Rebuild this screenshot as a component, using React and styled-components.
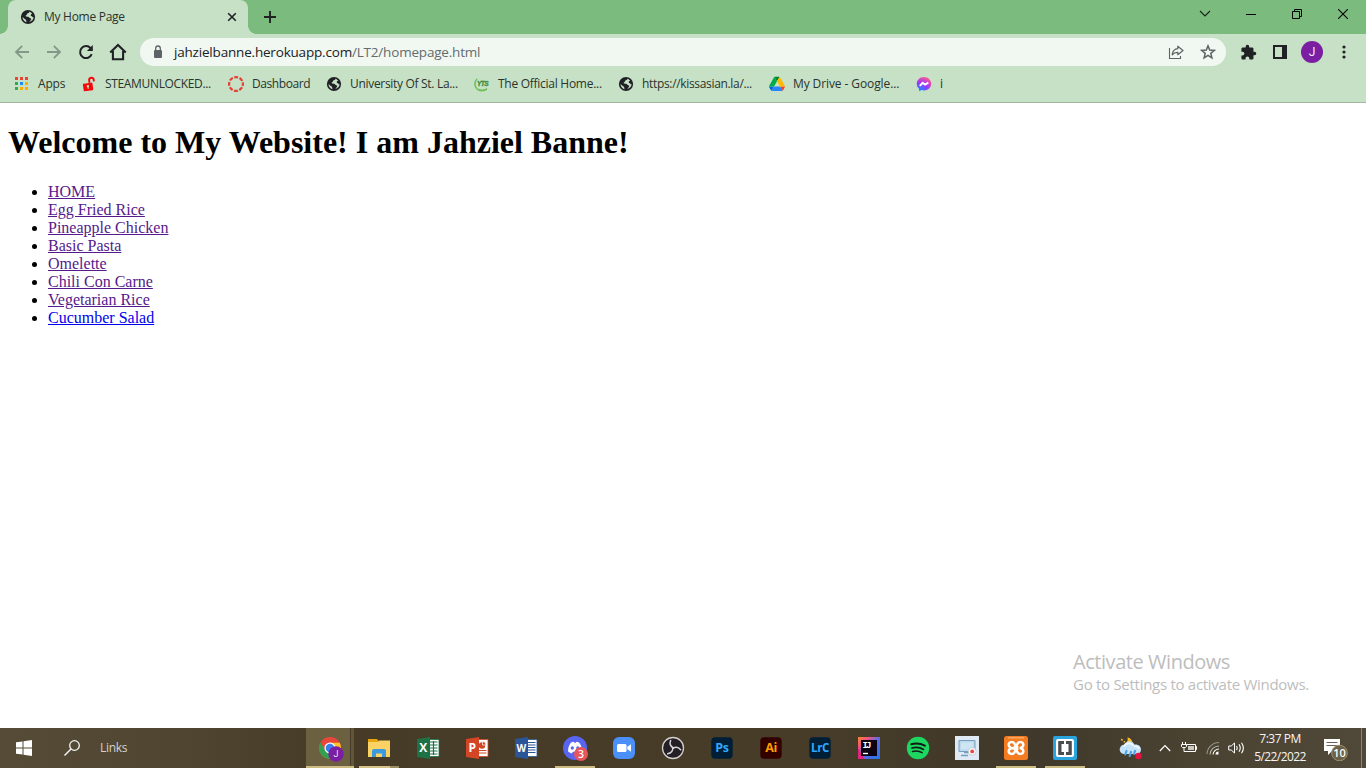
import React from "react";
import styled, { createGlobalStyle } from "styled-components";

const Global = createGlobalStyle`
  html, body { margin: 0; padding: 0; }
  body { width: 1366px; height: 768px; overflow: hidden; background: #fff; }
  svg { display: block; flex: none; }
`;

const UI = `"Open Sans", "Noto Sans", sans-serif`;

const Screen = styled.div`
  width: 1366px; height: 768px; display: flex; flex-direction: column;
  font-family: ${UI}; position: relative; overflow: hidden;
`;
const TabStrip = styled.header`
  height: 34px; background: #7bbb7d; display: flex; align-items: stretch; padding-left: 8px;
`;
const Tab = styled.div`
  position: relative; width: 240px; box-sizing: border-box; background: #c6e1c6;
  border-radius: 8px 8px 0 0; display: flex; align-items: center; padding: 0 10px 0 12px;
  &::before, &::after {
    content: ""; position: absolute; bottom: 0; width: 8px; height: 8px;
  }
  &::before { left: -8px; background: radial-gradient(circle at 0 0, #7bbb7d 7.5px, #c6e1c6 8px); }
  &::after { right: -8px; background: radial-gradient(circle at 100% 0, #7bbb7d 7.5px, #c6e1c6 8px); }
`;
const Text = styled.span`
  font-size: ${(p) => p.$size || 12}px; line-height: 16px; white-space: pre;
  color: ${(p) => p.$color || "#2b332c"}; letter-spacing: ${(p) => p.$track || 0}px;
`;
const TabTitle = styled(Text)`flex: 1; margin-left: 8px;`;
const NewTab = styled.div`width: 44px; display: flex; align-items: center; justify-content: center;`;
const WindowButtons = styled.div`margin-left: auto; display: flex; height: 28px;`;
const WindowButton = styled.div`width: 46px; display: flex; align-items: center; justify-content: center;`;

const Toolbar = styled.nav`
  height: 36px; background: #c6e1c6; display: flex; align-items: center; padding: 0 6px;
`;
const ToolButton = styled.div`width: 32px; display: flex; justify-content: center;`;
const StarButton = styled(ToolButton)`margin-right: -8px;`;
const Omnibox = styled.div`
  width: 1086px; height: 28px; margin: 0 6px; box-sizing: border-box; border-radius: 14px;
  background: #f1f8f1; display: flex; align-items: center; padding: 0 10px;
`;
const Url = styled(Text)`margin-left: 8px; flex: 1; line-height: 20px;`;
const Avatar = styled.div`
  width: 22px; height: 22px; border-radius: 50%; background: #7a1fa2; color: #f3e6f7;
  font: 12px/22px Roboto, sans-serif; text-align: center;
`;

const Bookmarks = styled.div`
  height: 32px; box-sizing: content-box; background: #c6e1c6; border-bottom: 1px solid #9fb8a0;
  display: flex; padding-left: 14px;
`;
const Bookmark = styled.div`
  width: ${(p) => p.$w}px; display: flex; align-items: center; gap: 8px; height: 28px;
`;

const Page = styled.main`
  flex: 1; padding: 0 8px; background: #fff; color: #000;
  font-family: "Liberation Serif", serif; font-size: 16px; overflow: hidden;
`;
const Title = styled.h1`font-size: 32px; line-height: 37px; margin: 21.4px 0; font-weight: bold;`;
const Links = styled.ul`margin: 0; padding-left: 40px; line-height: 18px;`;
const PageLink = styled.a`
  color: ${(p) => (p.$fresh ? "#0000ee" : "#551a8b")}; text-decoration: underline;
`;
const Watermark = styled.aside`
  position: absolute; left: 1073px; top: 649px; display: flex; flex-direction: column; white-space: nowrap;
`;
const WatermarkTitle = styled(Text)`line-height: 26px;`;
const WatermarkText = styled(Text)`line-height: 18px;`;

const Taskbar = styled.footer`
  height: 40px; display: flex; color: #fff;
  background: linear-gradient(90deg, #554b36 0, #4f4530 180px, #453b26 330px, #463c28 800px, #40382a 1040px, #4a4332 1200px, #504838 1366px);
`;
const StartButton = styled.div`width: 48px; display: flex; align-items: center; justify-content: center;`;
const Search = styled.div`width: 242px; display: flex; align-items: center; padding-left: 16px; gap: 20px; box-sizing: border-box; margin-right: 16px;`;
const Apps = styled.div`display: grid; grid-template-columns: repeat(16, 48px); column-gap: 1px;`;
const AppButton = styled.div`
  position: relative; display: flex; align-items: center; justify-content: center;
  background: ${(p) => (p.$active ? "linear-gradient(90deg, #6b6040 44px, #443a27 44px, #443a27 45px, #62573b 45px)" : "none")};
  &::after {
    content: ""; position: absolute; bottom: 0; height: 2px;
    left: ${(p) => (p.$active ? 0 : 4)}px; width: ${(p) => (p.$active ? 48 : 40)}px;
    background: ${(p) =>
      p.$stack ? "linear-gradient(90deg, #d4c286 31px, #9c8f65 31px)" : p.$open ? "#cdbc82" : "transparent"};
  }
`;
const Tray = styled.div`margin-left: auto; display: flex; align-items: center;`;
const TrayItem = styled.div`width: ${(p) => p.$w}px; display: flex; justify-content: center;`;
const Clock = styled.div`
  width: 64px; display: flex; flex-direction: column; align-items: center; gap: 2px; margin-left: 1px;
`;
const Notice = styled.div`width: 50px; display: flex; justify-content: center; margin-left: -1px;`;
const DesktopEdge = styled.div`width: 4px; height: 40px; border-left: 1px solid #8b8576;`;

const Svg = ({ s = 24, w, h, vb, children, ...r }) => (
  <svg width={w || s} height={h || s} viewBox={vb || `0 0 ${w || s} ${h || s}`} fill="none" {...r}>{children}</svg>
);

const Globe = () => (
  <Svg s={16}>
    <circle cx="8" cy="8" r="7.1" fill="#202124" />
    <path d="M9.400 2.800c0 1-.6 1.300-1.600 1.500-.8.200-.6.900-1 1.400-.5.600-1.300.7-1.200 1.400.2.800 1.300.5 2.400.6 1.300.1 1.300 1.300 2.200 1.500 1 .2 1.300.9.8 1.600l-1.700 2.100c2.300-.3 4.200-2.300 4.300-4.600-1 .2-1.500-.4-1.300-1.100-.9.100-1.500-.2-1.600-.9-.1-.8.700-1.100 1.500-1.200-.5-1.100-1.500-1.900-2.800-2.300Z" fill="#c6e1c6" />
    <path d="M2.500 8.100 5 10.200c1 .1 1.300.7 1.200 1.500l.3 1.600C4.200 12.700 2.500 10.700 2.500 8.100Z" fill="#c6e1c6" />
  </Svg>
);

const AppsGrid = () => {
  const c = ["#ea4335", "#ea4335", "#ea4335", "#34a853", "#1a8cff", "#fbad05", "#34a853", "#fbad05", "#fbad05"];
  return (
    <Svg s={16}>
      {c.map((f, i) => <rect key={i} x={1 + (i % 3) * 5} y={1 + Math.floor(i / 3) * 5} width="3" height="3" fill={f} />)}
    </Svg>
  );
};
const Unlocked = () => (
  <Svg s={16}>
    <g transform="rotate(-8 8 9)">
      <rect x="2" y="7" width="9.600" height="7.600" rx=".8" fill="#f50808" />
      <path d="M8.800 7V4.400a2.300 2.300 0 0 1 4.600 0V6" stroke="#f50808" strokeWidth="1.900" />
      <circle cx="6.700" cy="10" r="1.200" fill="#c6e1c6" /><path d="M6.700 10v2.800" stroke="#c6e1c6" />
    </g>
  </Svg>
);
const CanvasLogo = () => (
  <Svg s={16}>
    <circle cx="8" cy="8" r="6.900" stroke="#e63f33" strokeWidth="2.200" strokeDasharray="3.900 1.519" strokeDashoffset="1.950" />
  </Svg>
);
const Yts = () => (
  <Svg s={16}>
    <path d="M3.200 2.800A7 7 0 0 0 3 13c2.500 2.400 7.200 2.500 10 .2" stroke="#6fbd55" strokeWidth="1.200" />
    <path d="M4.500 13c2.800 1.400 6 1 8.500-.5M1.500 5C.6 7.500.9 10 2 12" stroke="#6fbd55" strokeWidth=".9" />
    <text x="3" y="10" fontFamily="Liberation Sans" fontSize="6.500" fontStyle="italic" fontWeight="bold" fill="#388c35" stroke="#388c35" strokeWidth=".3" textLength="11.500">YTS</text>
  </Svg>
);
const Drive = () => (
  <Svg s={16} vb="0 0 87.300 87">
    <g transform="translate(0 4)">
      <path d="M6.600 66.850 10.450 73.500c.8 1.400 1.950 2.500 3.300 3.300L27.500 53H0c0 1.550.4 3.100 1.200 4.500Z" fill="#0066da" />
      <path d="M43.650 25 29.900 1.200c-1.350.8-2.500 1.900-3.300 3.300L1.200 48.500A9 9 0 0 0 0 53h27.500Z" fill="#00ac47" />
      <path d="M73.550 76.800c1.350-.8 2.500-1.900 3.300-3.300l9.250-16c.8-1.400 1.200-2.950 1.200-4.500H59.800l5.850 11.500Z" fill="#ea4335" />
      <path d="M43.650 25 57.400 1.200C56.050.4 54.500 0 52.900 0H34.400c-1.600 0-3.150.45-4.500 1.200Z" fill="#00832d" />
      <path d="M59.800 53H27.500L13.750 76.800c1.350.8 2.900 1.200 4.500 1.200h50.800c1.600 0 3.150-.45 4.500-1.200Z" fill="#2684fc" />
      <path d="m73.400 26.500-12.700-22c-.8-1.400-1.950-2.500-3.300-3.300L43.650 25 59.800 53h27.450c0-1.550-.4-3.100-1.200-4.500Z" fill="#ffba00" />
    </g>
  </Svg>
);
const Messenger = () => (
  <Svg s={16}>
    <defs><radialGradient id="msg" cx=".2" cy="1" r="1.100"><stop stopColor="#0695ff" /><stop offset=".55" stopColor="#a033ff" /><stop offset="1" stopColor="#ff5c87" /></radialGradient></defs>
    <path d="M8 1C3.900 1 .8 3.900.8 7.800c0 2 .8 3.700 2.200 4.900l.2 2.500 2.400-1.100c.8.2 1.600.3 2.400.3 4.100 0 7.200-2.900 7.200-6.700S12.100 1 8 1Z" fill="url(#msg)" />
    <path d="m3.800 9.900 2.800-3.100 2.500 1.700 3.200-1.900" stroke="#fff" strokeWidth="1.900" />
  </Svg>
);

const Back = () => (
  <Svg s={16}><path d="M15 8H2.200M8.200 1.800 2 8l6.200 6.200" stroke="#839886" strokeWidth="1.800" /></Svg>
);
const Forward = () => (
  <Svg s={16}><path d="M1 8h12.800M7.800 1.800 14 8l-6.200 6.200" stroke="#839886" strokeWidth="1.800" /></Svg>
);
const Reload = () => (
  <Svg s={16}>
    <path d="M13.700 10.200A6 6 0 1 1 12.500 4l1 1" stroke="#202124" strokeWidth="2" />
    <path d="M14.800 1v6H8.900Z" fill="#202124" />
  </Svg>
);
const Home = () => (
  <Svg s={18}><path d="M1.200 9.500 9 2l7.800 7.500M3.900 8v8.200h10.200V8" stroke="#202124" strokeWidth="2.100" /></Svg>
);
const Lock = () => (
  <Svg s={16}><rect x="4" y="6" width="8" height="8" rx="1" fill="#5f6368" /><path d="M5.700 7V4.300a2.300 2.300 0 0 1 4.600 0V7" stroke="#5f6368" strokeWidth="1.300" /></Svg>
);
const Share = () => (
  <Svg s={16}><path d="M1.500 4v10.500h11V12" stroke="#5f6368" strokeWidth="1.100" /><path d="M9.800 2.200 15 6.500l-5.200 4.200V8.300C7.200 8.200 5.500 9 4.200 10.800 4.600 7.500 6.500 5 9.800 4.700Z" stroke="#5f6368" strokeWidth="1.200" strokeLinejoin="round" /></Svg>
);
const Star = () => (
  <Svg s={16}><path d="m8 1.900 1.700 4.200 4.600.3-3.500 2.900 1.100 4.500L8 11.400l-3.900 2.400 1.100-4.500-3.500-2.900 4.600-.3Z" stroke="#5f6368" strokeWidth="1.500" /></Svg>
);
const Puzzle = () => (
  <Svg s={17} vb="0 0 24 24"><path fill="#202124" d="M20.500 11H19V7c0-1.100-.9-2-2-2h-4V3.500a2.500 2.500 0 0 0-5 0V5H4c-1.100 0-1.990.9-1.990 2v3.800H3.500c1.490 0 2.700 1.210 2.700 2.700s-1.210 2.700-2.700 2.700H2V20c0 1.100.9 2 2 2h3.800v-1.500c0-1.490 1.210-2.700 2.700-2.700s2.700 1.210 2.700 2.700V22H17c1.100 0 2-.9 2-2v-4h1.500a2.500 2.500 0 0 0 0-5Z" /></Svg>
);
const SidePanel = () => <Svg s={14}><path d="M1 1h12v12H1Z" stroke="#202124" strokeWidth="2" /><path d="M9 0h5v14H9Z" fill="#202124" /></Svg>;
const Dots = () => <Svg w={4} h={16}><circle cx="2" cy="3" r="1.600" fill="#202124" /><circle cx="2" cy="8" r="1.600" fill="#202124" /><circle cx="2" cy="13" r="1.600" fill="#202124" /></Svg>;

const Chrome = () => (
  <Svg s={28}>
    <circle cx="14" cy="14" r="11" fill="#e9473c" />
    <path d="M4.500 8.500A11 11 0 0 0 14 25l5-8.500H9.200Z" fill="#31a350" />
    <path d="M14 8.800h9.700A11 11 0 0 1 14 25l4.700-8.400Z" fill="#fbc622" />
    <circle cx="14" cy="14" r="5.600" fill="#f5f7fb" /><circle cx="14" cy="14" r="4.300" fill="#3b7ded" />
    <circle cx="20" cy="20" r="7.700" fill="#7b1fa2" />
    <text x="20" y="23.300" textAnchor="middle" fontFamily="Roboto" fontSize="9" fill="#eedff3">J</text>
  </Svg>
);
const Explorer = () => (
  <Svg s={24}>
    <path d="M1 3h9l1.500 2H23v4H1Z" fill="#e8a70f" /><path d="M1 6h10l1-1.500h11V21H1Z" fill="#fbd263" />
    <path d="M5 21v-6a2 2 0 0 1 2-2h10a2 2 0 0 1 2 2v6h-4v-3.500H9V21Z" fill="#3b9ade" />
  </Svg>
);
const Office = ({ color, letter }) => (
  <Svg s={24}>
    <path d="M12 3.500h11v17H12Z" fill="#fff" stroke={color} strokeWidth=".8" />
    {letter === "X" && <path d="M14 6h7.500M14 9h7.500M14 12h7.500M14 15h7.500M14 18h7.500M17.500 5v14" stroke={color} strokeWidth="1.200" />}
    {letter === "W" && <path d="M14 6.500h7.500M14 9h7.500M14 11.500h7.500M14 14h7.500M14 16.500h7.500" stroke={color} strokeWidth="1.100" />}
    {letter === "P" && <><circle cx="17" cy="9.500" r="3.200" fill={color} /><path d="M17.500 9V5.500A3.500 3.500 0 0 1 21 9Z" fill={color} stroke="#fff" strokeWidth=".7" /><path d="M14 14.500h7.500M14 17h7.500" stroke={color} strokeWidth="1.200" /></>}
    <path d="M1 3 14 1v22L1 21Z" fill={color} />
    <text x="7.300" y="16.300" textAnchor="middle" fontFamily="Open Sans" fontWeight="bold" fontSize={letter === "W" ? 10 : 12} fill="#fff">{letter}</text>
  </Svg>
);
const Discord = () => (
  <Svg s={28}>
    <circle cx="14" cy="14" r="12" fill="#5865f2" />
    <path d="M9.800 8.700c1-.6 2-.8 3-.9l.5 1h1.500l.5-1c1.100.1 2.100.4 3 .9 2.200 3 2.900 6 2.600 9-1.300 1-2.500 1.500-3.700 1.700l-.9-1.600h-4.500l-.9 1.600c-1.200-.2-2.400-.8-3.700-1.700-.3-3 .4-6 2.600-9Z" fill="#fff" />
    <ellipse cx="11.300" cy="14" rx="1.600" ry="1.800" fill="#5865f2" /><ellipse cx="16.800" cy="14" rx="1.600" ry="1.800" fill="#5865f2" />
    <circle cx="20" cy="20" r="7" fill="#e8555a" />
    <text x="20" y="23.800" textAnchor="middle" fontFamily="Open Sans" fontWeight="600" fontSize="10.500" fill="#fff">3</text>
  </Svg>
);
const Zoom = () => <Svg s={24}><rect x="1" y="1" width="22" height="22" rx="6" fill="#4a90f8" /><rect x="5" y="8" width="9.500" height="8" rx="1.500" fill="#fff" /><path d="m15.300 10.800 3.700-2.600v7.600l-3.700-2.600Z" fill="#fff" /></Svg>;
const Obs = () => (
  <Svg s={24}>
    <circle cx="12" cy="12" r="10.500" fill="#231f25" stroke="#d1d0ce" strokeWidth="1.300" />
    <g fill="none" stroke="#d6d5d5" strokeWidth="1.500" strokeLinecap="round">
      {[0, 120, 240].map((a) => <path key={a} transform={`rotate(${a} 12 12)`} d="M12.500 12C9.500 10.500 8.400 7.700 9.600 4.500" />)}
    </g>
  </Svg>
);
const Adobe = ({ bg, fg, label, size }) => (
  <Svg s={24}>
    <rect x="1.300" y="1.300" width="21.400" height="21.400" rx="4" fill={bg} />
    <text x="12" y="16.300" textAnchor="middle" fontFamily="Open Sans" fontWeight="bold" fontSize={size || 12.5} fill={fg} letterSpacing="-.4">{label}</text>
  </Svg>
);
const IntelliJ = () => (
  <Svg s={24}>
    <defs><linearGradient id="ij" x1="0" y1="0" x2="1" y2="1"><stop stopColor="#f58a2b" /><stop offset=".25" stopColor="#f3527d" /><stop offset=".5" stopColor="#5b6be8" /><stop offset="1" stopColor="#2475e8" /></linearGradient></defs>
    <path d="M1 1h22v22H1Z" fill="url(#ij)" /><path d="M1 12 8 23H1Z" fill="#e32581" /><path d="M4 4h16v16H4Z" fill="#0d0312" />
    <text x="5.500" y="12.300" fontFamily="Liberation Mono" fontWeight="bold" fontSize="9" fill="#fff" textLength="9">IJ</text>
    <path d="M6 17.500h5" stroke="#fff" strokeWidth="1.400" />
  </Svg>
);
const Spotify = () => <Svg s={24}><circle cx="12" cy="12" r="11.200" fill="#1ed760" /><path d="M5.300 8.300c4.500-1.300 9.300-.9 13.500 1.400" stroke="#111c14" strokeWidth="2.100" strokeLinecap="round" /><path d="M6 12c4-1.100 8-.7 11.500 1.400" stroke="#111c14" strokeWidth="1.800" strokeLinecap="round" /><path d="M6.500 15.500c3.500-.9 6.700-.6 9.700 1.200" stroke="#111c14" strokeWidth="1.500" strokeLinecap="round" /></Svg>;
const Recorder = () => (
  <Svg s={24}>
    <path d="M0 0h24v24H0Z" fill="#dfeaf5" /><path d="M4 4.500h16v11H4Z" fill="#bdd9ec" stroke="#779ebd" />
    <path d="M6 6.500h12v7H6Z" fill="#cfe5f3" /><path d="M9 16.500h6M6 19.500h7" stroke="#779ebd" strokeWidth="1.300" />
    <circle cx="17.200" cy="15.400" r="4" fill="#f5f6f8" stroke="#b6c4d1" strokeWidth=".7" /><circle cx="17.200" cy="15.400" r="1.900" fill="#ef4544" />
  </Svg>
);
const Xampp = () => (
  <Svg s={24}>
    <rect width="24" height="24" rx="2.500" fill="#f47b20" /><path d="M4 1.800h16" stroke="#faae72" strokeWidth="1.300" />
    <path d="M10.300 12.400C7.600 12.600 4.400 11 4.700 8.300c.3-2.600 4.400-3 5.800-.6L12 10l1.500-2.300c1.400-2.400 5.500-2 5.800.6.200 1.700-1 2.900-2.700 3.700 1.700.7 2.900 2 2.700 3.700-.3 2.600-4.400 3-5.800.6L12 14l-1.500 2.300c-1.400 2.400-5.500 2-5.800-.6-.2-1.700 1-2.900 2.700-3.700" stroke="#fff" strokeWidth="2.500" strokeLinecap="round" strokeLinejoin="round" />
    <path d="m10 10 4 4m0-4-4 4" stroke="#fff" strokeWidth="2.500" />
  </Svg>
);
const Brackets = () => (
  <Svg s={24}><rect width="24" height="24" rx="2" fill="#2ba3dc" /><rect x="3" y="3" width="18" height="18" rx="2" fill="#fff" /><path d="M11 5H5.200v14H11v-3H8.500V8H11ZM13 5h5.800v14H13v-3h2.500V8H13Z" fill="#4a4d50" /></Svg>
);
const Weather = () => (
  <Svg s={26}>
    <path d="M10.500 2.200c1 4-1.300 7.500-6.800 8.800 1.600 2.600 4 3.700 7 3.200l5-4.500c.2-3.700-1.800-6.500-5.200-7.500Z" fill="#f7bb2c" />
    <path d="m4.300 4 1.200 1.500M6.700 6.300l1.200.8" stroke="#f7bb2c" strokeWidth="1.500" />
    <path d="M7.300 19a4.600 4.600 0 0 1-.1-9.200c1.300-4.200 8-4.900 10.200-.2 4-.5 6.600 1.800 6.600 4.800 0 2.800-2 4.600-4.600 4.600Z" fill="#c5e3f8" />
    <path d="M7 11.700c1.500-4 7.200-4.700 9.300-.8M17 11.500c2.500-.5 4.500.6 5 2.400" stroke="#edf8ff" strokeWidth="1.800" />
    <path d="m9.500 16-1.200 3.500M14 17l-1.300 4M18 16l-1 3" stroke="#4ba0e6" strokeWidth="2.200" strokeLinecap="round" /><circle cx="21.500" cy="21" r="3.200" fill="#e3123e" />
  </Svg>
);

const bookmarks = [
  { w: 67, icon: <AppsGrid />, label: "Apps" },
  { w: 147, icon: <Unlocked />, label: "STEAMUNLOCKED...", track: -0.34 },
  { w: 98, icon: <CanvasLogo />, label: "Dashboard", track: -0.42 },
  { w: 148, icon: <Globe />, label: "University Of St. La...", track: -0.31 },
  { w: 144, icon: <Yts />, label: "The Official Home...", track: -0.27 },
  { w: 151, icon: <Globe />, label: "https://kissasian.la/...", track: -0.33 },
  { w: 147, icon: <Drive />, label: "My Drive - Google...", track: -0.1 },
  { w: 50, icon: <Messenger />, label: "i" },
];
const apps = [
  { icon: <Chrome />, active: true, open: true },
  { icon: <Explorer />, open: true, stack: true },
  { icon: <Office color="#1d7145" letter="X" /> },
  { icon: <Office color="#d24625" letter="P" /> },
  { icon: <Office color="#2a5699" letter="W" /> },
  { icon: <Discord />, open: true },
  { icon: <Zoom /> },
  { icon: <Obs /> },
  { icon: <Adobe bg="#001e36" fg="#31a8ff" label="Ps" /> },
  { icon: <Adobe bg="#330000" fg="#ff9a00" label="Ai" /> },
  { icon: <Adobe bg="#001e36" fg="#31a8ff" label="LrC" size={11.5} /> },
  { icon: <IntelliJ /> },
  { icon: <Spotify /> },
  { icon: <Recorder /> },
  { icon: <Xampp />, open: true },
  { icon: <Brackets />, open: true },
];
const links = ["HOME", "Egg Fried Rice", "Pineapple Chicken", "Basic Pasta", "Omelette", "Chili Con Carne", "Vegetarian Rice", "Cucumber Salad"];

export default function App() {
  return (
    <Screen>
      <Global />
      <TabStrip>
        <Tab>
          <Globe />
          <TabTitle $track={-0.28}>My Home Page</TabTitle>
          <Svg s={12}><path d="m2.200 2.200 7.600 7.600m0-7.600L2.200 9.800" stroke="#202124" strokeWidth="1.600" /></Svg>
        </Tab>
        <NewTab><Svg s={12}><path d="M6 0v12M0 6h12" stroke="#202124" strokeWidth="1.900" /></Svg></NewTab>
        <WindowButtons>
          <WindowButton><Svg w={12} h={8}><path d="m1 1 5 5 5-5" stroke="#172318" strokeWidth="1.100" /></Svg></WindowButton>
          <WindowButton><Svg s={10}><path d="M0 5.500h10" stroke="#000" /></Svg></WindowButton>
          <WindowButton><Svg s={10}><path d="M.5 2.500h7v7h-7ZM2.500 2.500v-2h7v7h-2" stroke="#000" /></Svg></WindowButton>
          <WindowButton><Svg s={10}><path d="m0 0 10 10M10 0 0 10" stroke="#000" strokeWidth="1.100" /></Svg></WindowButton>
        </WindowButtons>
      </TabStrip>
      <Toolbar>
        <ToolButton><Back /></ToolButton>
        <ToolButton><Forward /></ToolButton>
        <ToolButton><Reload /></ToolButton>
        <ToolButton><Home /></ToolButton>
        <Omnibox>
          <Lock />
          <Url $size={13.5} $color="#202124" $track={-0.19}>jahzielbanne.herokuapp.com<Text $size={13.5} $color="#646b6d" $track={-0.19}>/LT2/homepage.html</Text></Url>
          <ToolButton><Share /></ToolButton>
          <StarButton><Star /></StarButton>
        </Omnibox>
        <ToolButton><Puzzle /></ToolButton>
        <ToolButton><SidePanel /></ToolButton>
        <ToolButton><Avatar>J</Avatar></ToolButton>
        <ToolButton><Dots /></ToolButton>
      </Toolbar>
      <Bookmarks>
        {bookmarks.map((b) => (
          <Bookmark key={b.label} $w={b.w}>{b.icon}<Text $track={b.track ?? -0.2}>{b.label}</Text></Bookmark>
        ))}
      </Bookmarks>
      <Page>
        <Title>Welcome to My Website! I am Jahziel Banne!</Title>
        <Links>
          {links.map((l, i) => <li key={l}><PageLink $fresh={i === 7}>{l}</PageLink></li>)}
        </Links>
      </Page>
      <Watermark>
        <WatermarkTitle $size={20} $color="#bdbdbd" $track={-0.45}>Activate Windows</WatermarkTitle>
        <WatermarkText $size={15} $color="#bdbdbd" $track={-0.28}>Go to Settings to activate Windows.</WatermarkText>
      </Watermark>
      <Taskbar>
        <StartButton><Svg s={16}><path d="M0 2.300 6.500 1.400v6.100H0ZM7.500 1.200 16 0v7.500H7.500ZM0 8.500h6.500v6.100L0 13.700ZM7.500 8.500H16V16l-8.500-1.200Z" fill="#fff" /></Svg></StartButton>
        <Search>
          <Svg s={16}><circle cx="10.500" cy="5.500" r="4.800" stroke="#f5f5f2" strokeWidth="1.300" /><path d="M7 9 .5 15.500" stroke="#f5f5f2" strokeWidth="1.400" /></Svg>
          <Text $color="#d6d3cc" $track={-0.3}>Links</Text>
        </Search>
        <Apps>
          {apps.map((a, i) => <AppButton key={i} $active={a.active} $open={a.open} $stack={a.stack}>{a.icon}</AppButton>)}
        </Apps>
        <Tray>
          <TrayItem $w={46}><Weather /></TrayItem>
          <TrayItem $w={24}><Svg w={12} h={8}><path d="m.8 7 5.200-5.500L11.200 7" stroke="#fff" strokeWidth="1.200" /></Svg></TrayItem>
          <TrayItem $w={24}><Svg s={16}><path d="M5.500 4.500h9v7h-9M14.500 6.500h1v3h-1" stroke="#fff" /><path d="M7 6h6v4H7Z" fill="#f6f5f2" opacity=".75" /><path d="M.5 4.500h5v2l-1 1h-3l-1-1ZM1.500 2v2M4.500 2v2M3 8v3.500h3" stroke="#fff" /></Svg></TrayItem>
          <TrayItem $w={24}><Svg s={14}><g stroke="#b9b5ac" strokeWidth="1.100"><path d="M1 13A12 12 0 0 1 13 1.500" opacity=".7" /><path d="M4 13.500A9 9 0 0 1 13 5" /><path d="M7 13.500a6 6 0 0 1 6-5.500" stroke="#fff" /></g><path d="M9.500 13.500a3 3 0 0 1 3-3v3Z" fill="#fff" /></Svg></TrayItem>
          <TrayItem $w={22}><Svg w={17} h={14}><path d="M.7 5h2.500l3.300-3v10l-3.300-3H.7Z" stroke="#fff" /><path d="M8.500 5q1.300 2 0 4M11 3.300q2.500 3.700 0 7.400M13.500 1.800q3.800 5.200 0 10.400" stroke="#fff" strokeWidth="1.100" /></Svg></TrayItem>
          <Clock>
            <Text $color="#f7f6f4" $track={-0.5}>7:37 PM</Text>
            <Text $color="#f7f6f4" $track={-0.6}>5/22/2022</Text>
          </Clock>
          <Notice>
            <Svg w={26} h={26}>
              <path d="M1 4h16v12H9l-4 4v-4H1Z" fill="#fff" /><path d="M3.500 7.500h11M3.500 10.500h11" stroke="#6a6250" />
              <circle cx="16.500" cy="18" r="7.800" fill="#6b6247" stroke="#9b9072" />
              <text x="16.500" y="22" textAnchor="middle" fontFamily="Open Sans" fontSize="11" fontWeight="600" fill="#fff">10</text>
            </Svg>
          </Notice>
          <DesktopEdge />
        </Tray>
      </Taskbar>
    </Screen>
  );
}
